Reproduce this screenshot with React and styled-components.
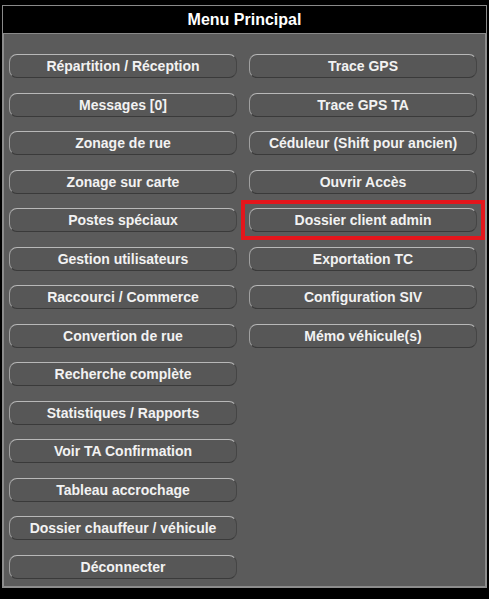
import React from "react";
import styled, { createGlobalStyle, css } from "styled-components";

const Global = createGlobalStyle`
  html, body { margin: 0; background: #000; }
  body { font-family: "Liberation Sans", Arial, sans-serif; }
`;

const Frame = styled.div`
  width: 489px; height: 599px; background: #000; padding: 5px 2px 0 2px; box-sizing: border-box;
`;
const Header = styled.div`
  height: 29px; border: 1px solid #8a8a8a; background: #000; color: #fff;
  display: flex; align-items: center; justify-content: center;
  font-weight: bold; font-size: 16px; box-sizing: border-box;
`;
const Panel = styled.div`
  height: 554px; background: #5b5b5b; border: 2px solid #8c8c8c; border-top: none;
  box-sizing: border-box; padding: 20px 8px 0 5px;
  display: grid; grid-template-columns: 228px 228px; column-gap: 12px;
  row-gap: 14.5px; grid-auto-flow: column;
  grid-template-rows: repeat(14, 24px);
`;
const Btn = styled.div`
  position: relative;
  border-radius: 8px; background: #575757;
  border-top: 1.5px solid #b8b8b8; border-left: 1.5px solid #a0a0a0;
  border-bottom: 1.5px solid #3a3a3a; border-right: 1.5px solid #454545;
  color: #f2f2f2; font-weight: bold; font-size: 14px;
  display: flex; align-items: center; justify-content: center; box-sizing: border-box;
  grid-column: ${p => p.$col};
  ${p => p.$hl && css`
    &::after {
      content: ""; position: absolute; left: -9px; right: -9px; top: -9px; bottom: -9px;
      border: 4px solid #e4161c;
    }
  `}
`;

const left = ["Répartition / Réception","Messages [0]","Zonage de rue","Zonage sur carte","Postes spéciaux","Gestion utilisateurs","Raccourci / Commerce","Convertion de rue","Recherche complète","Statistiques / Rapports","Voir TA Confirmation","Tableau accrochage","Dossier chauffeur / véhicule","Déconnecter"];
const right = ["Trace GPS","Trace GPS TA","Céduleur (Shift pour ancien)","Ouvrir Accès","Dossier client admin","Exportation TC","Configuration SIV","Mémo véhicule(s)"];

export default function App() {
  return (
    <>
      <Global />
      <Frame>
        <Header>Menu Principal</Header>
        <Panel>
          {left.map(t => <Btn key={t} $col={1}>{t}</Btn>)}
          {right.map(t => <Btn key={t} $col={2} $hl={t === "Dossier client admin"}>{t}</Btn>)}
        </Panel>
      </Frame>
    </>
  );
}
